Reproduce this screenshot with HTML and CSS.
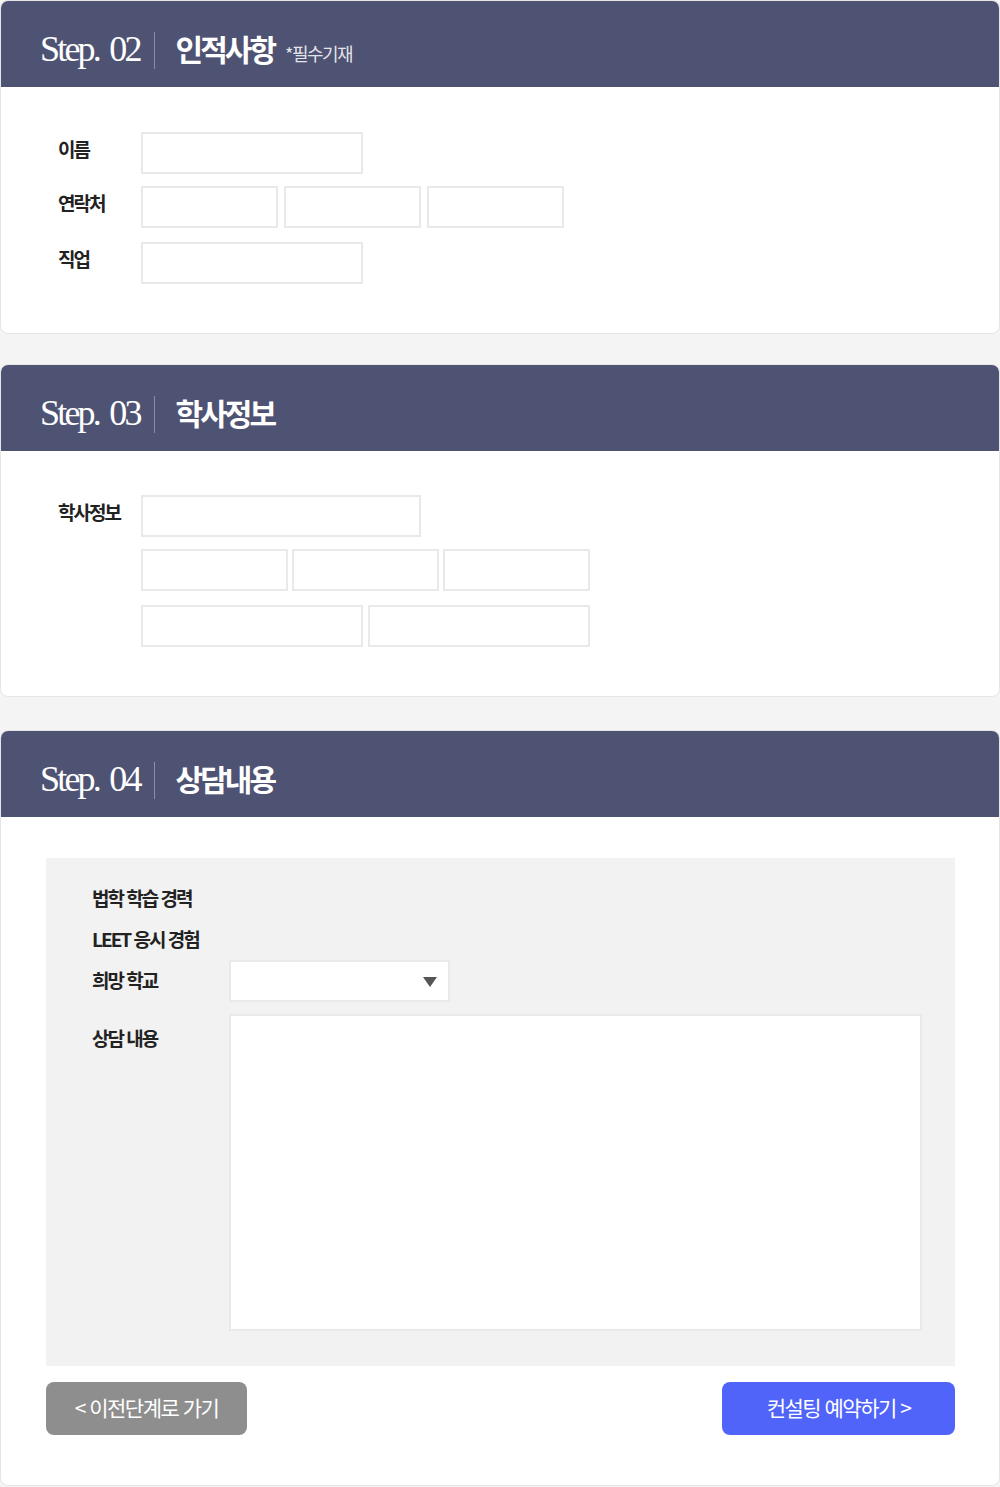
FILE: index.html
```html
<!DOCTYPE html>
<html lang="ko">
<head>
    <meta charset="UTF-8">
    <meta name="viewport" content="width=device-width, initial-scale=1.0">
    <title>컨설팅 예약</title>
    <link rel="stylesheet" href="styles.css">
</head>
<body>
    <div class="card step02">
        <div class="step-head">
            <span class="step-no">Step. 02</span>
            <span class="step-bar"></span>
            <span class="step-title">인적사항</span>
            <span class="step-note">*필수기재</span>
        </div>
        <div class="step-body">
            <div class="row">
                <label class="lbl">이름</label>
                <input class="field w222" type="text">
            </div>
            <div class="row gap6">
                <label class="lbl">연락처</label>
                <input class="field w137" type="text">
                <input class="field w137" type="text">
                <input class="field w137" type="text">
            </div>
            <div class="row">
                <label class="lbl">직업</label>
                <input class="field w222" type="text">
            </div>
        </div>
    </div>

    <div class="card step03">
        <div class="step-head">
            <span class="step-no">Step. 03</span>
            <span class="step-bar"></span>
            <span class="step-title">학사정보</span>
        </div>
        <div class="step-body">
            <div class="row">
                <label class="lbl">학사정보</label>
                <input class="field w280" type="text">
            </div>
            <div class="row gap4">
                <span class="lbl"></span>
                <input class="field w147" type="text">
                <input class="field w147" type="text">
                <input class="field w147" type="text">
            </div>
            <div class="row gap5">
                <span class="lbl"></span>
                <input class="field w222" type="text">
                <input class="field w222" type="text">
            </div>
        </div>
    </div>

    <div class="card step04">
        <div class="step-head">
            <span class="step-no">Step. 04</span>
            <span class="step-bar"></span>
            <span class="step-title">상담내용</span>
        </div>
        <div class="step-body">
            <div class="consult">
                <div class="qrow q1"><span class="qlbl">법학 학습 경력</span></div>
                <div class="qrow q2"><span class="qlbl">LEET 응시 경험</span></div>
                <div class="qrow q3">
                    <span class="qlbl">희망 학교</span>
                    <div class="select">
                        <span class="arrow"></span>
                    </div>
                </div>
                <div class="qrow q4">
                    <span class="qlbl">상담 내용</span>
                    <textarea class="memo"></textarea>
                </div>
            </div>
            <div class="btns">
                <button class="btn prev">&lt;&nbsp;이전단계로 가기</button>
                <button class="btn next">컨설팅 예약하기&nbsp;&gt;</button>
            </div>
        </div>
    </div>
</body>
</html>
```

FILE: styles.css
```css
body { margin: 0; background: #f4f4f4; font-family: "Noto Sans CJK KR", "Noto Sans", sans-serif; color: #222; }

.card { width: 998px; background: #fff; border: 1px solid #e6e6e6; border-radius: 8px; overflow: hidden; }
.step02 { margin-bottom: 30px; }
.step03 { margin-bottom: 33px; }

.step-head { box-sizing: border-box; height: 86px; background: #4f5373; display: flex; align-items: center; padding: 12px 0 0 39px; color: #fff; }
.step-no { font-family: "Liberation Serif", serif; font-size: 36px; letter-spacing: -2.8px; word-spacing: 4px; line-height: 1; margin-top: -2px; }
.step-bar { width: 1px; height: 37px; background: rgba(255,255,255,0.35); margin: 0 21px 0 14px; }
.step-title { font-size: 30px; font-weight: 700; letter-spacing: -3px; line-height: 1; margin-top: -4px; }
.step-note { font-size: 18px; letter-spacing: -1.5px; margin-left: 11px; margin-top: 6px; color: rgba(255,255,255,0.85); }

.step-body { padding: 45px 0 49px 57px; }
.step03 .step-body { padding-top: 44px; }
.row { display: flex; align-items: center; }
.row + .row { margin-top: 12px; }
.row + .row + .row { margin-top: 14px; }
.gap6 { gap: 6px; }
.gap4 { gap: 4px; }
.gap5 { gap: 5px; }
.lbl { width: 83px; flex: none; font-size: 19px; font-weight: 700; letter-spacing: -2px; line-height: 1; padding-bottom: 10px; }
.gap6 .lbl { margin-right: -6px; }
.gap4 .lbl { margin-right: -4px; }
.gap5 .lbl { margin-right: -5px; }

.field { box-sizing: border-box; height: 42px; border: 2px solid #e9e9e9; background: #fff; margin: 0; padding: 0 10px; outline: none; }
.w222 { width: 222px; }
.w137 { width: 137px; }
.w280 { width: 280px; }
.w147 { width: 147px; }

.step04 .step-body { padding: 41px 44px 50px 45px; }
.consult { background: #f2f2f2; height: 508px; box-sizing: border-box; padding: 20px 32px 0 46px; }
.qrow { display: flex; align-items: center; }
.q1 { height: 42px; }
.q2 { height: 40px; }
.q3 { height: 42px; }
.q4 { align-items: flex-start; margin-top: 12px; }
.qlbl { width: 137px; flex: none; font-size: 19px; font-weight: 700; letter-spacing: -2px; line-height: 1; }
.q1 .qlbl, .q2 .qlbl { margin-top: -4px; }
.q3 .qlbl { margin-top: -4px; }
.q4 .qlbl { margin-top: 14px; }

.select { position: relative; box-sizing: border-box; width: 221px; height: 42px; background: #fff; border: 2px solid #e9e9e9; }
.arrow { position: absolute; right: 11px; top: 15px; width: 0; height: 0; border-left: 7px solid transparent; border-right: 7px solid transparent; border-top: 10px solid #555; }

.memo { box-sizing: border-box; width: 693px; height: 317px; border: 2px solid #e9e9e9; background: #fff; resize: none; margin: 0; outline: none; }

.btns { display: flex; justify-content: space-between; margin-top: 16px; }
.btn { height: 53px; border: none; border-radius: 8px; color: #fff; font-family: "Noto Sans CJK KR", sans-serif; font-size: 21px; letter-spacing: -1.5px; padding: 0 0 3px; cursor: pointer; }
.prev { width: 201px; background: #8e8e8e; }
.next { width: 233px; background: #5064fa; }
```
